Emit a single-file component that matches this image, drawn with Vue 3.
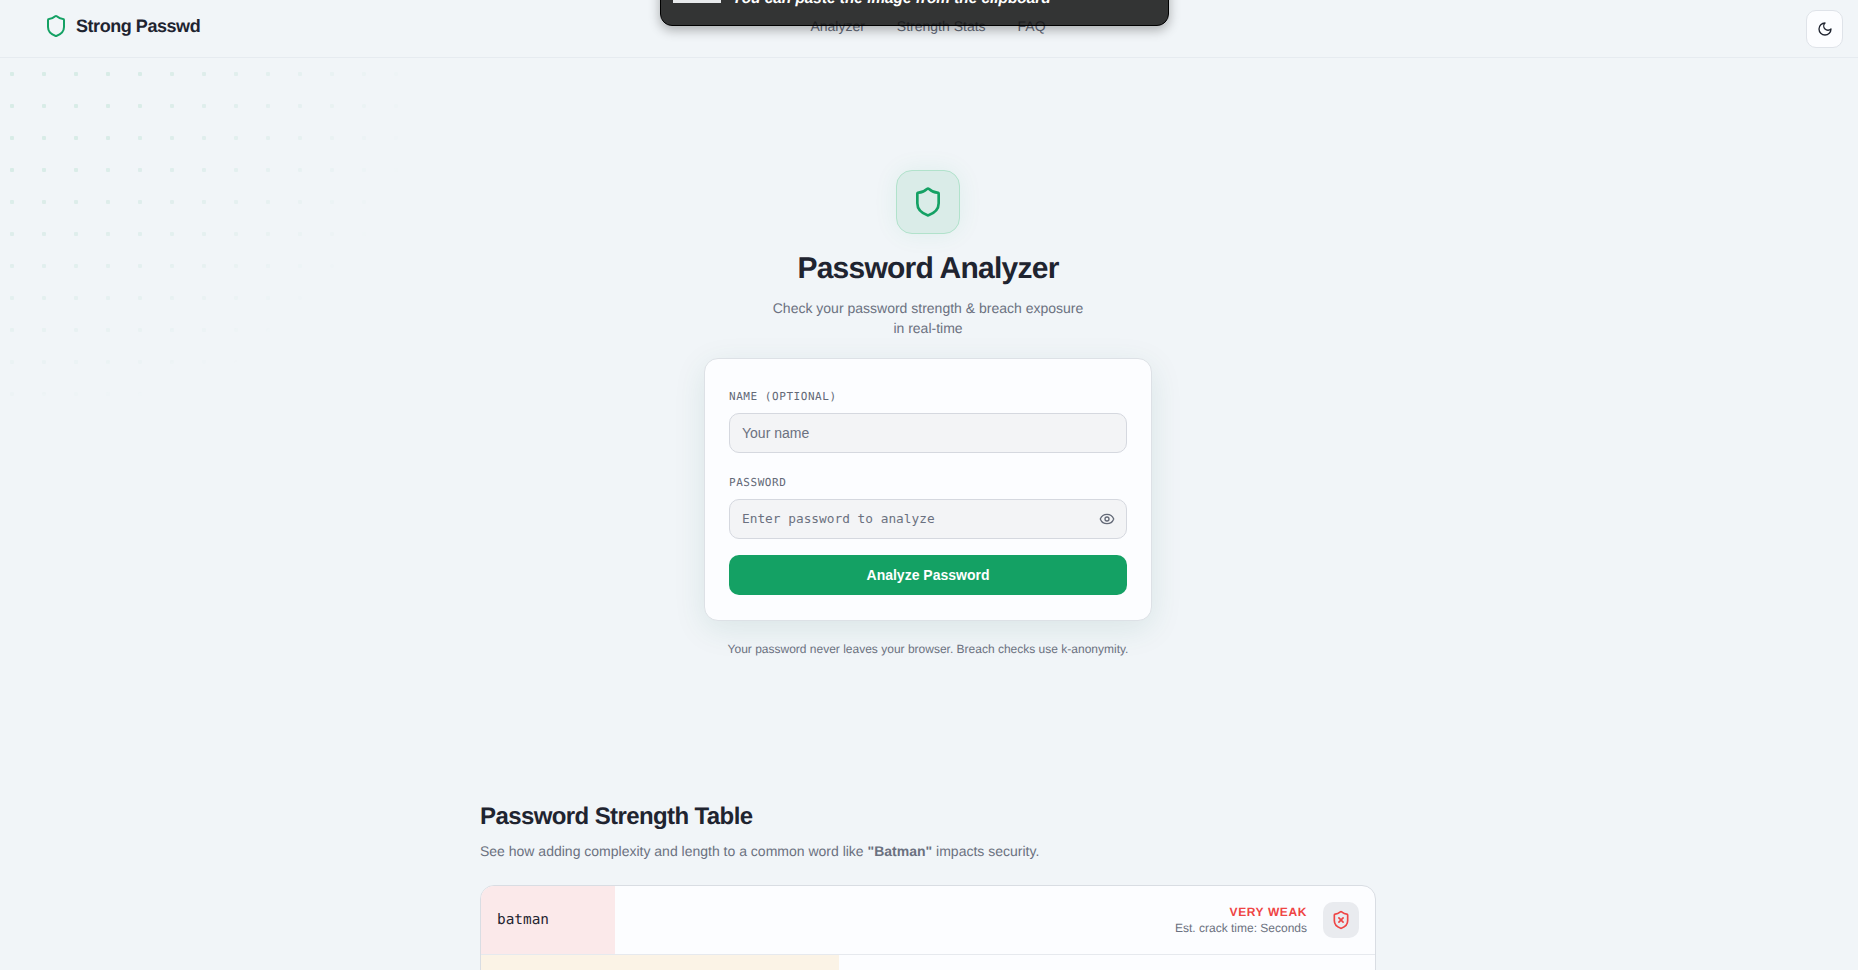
<script setup>
const rows = [
  { word: 'batman', barWidth: 134, tone: 'red', label: 'VERY WEAK', time: 'Est. crack time: Seconds' },
  { word: '', barWidth: 358, tone: 'amber' }
]
</script>

<template>
  <div class="page">
    <div class="dots"></div>

    <header class="navbar">
      <a class="logo">
        <svg class="logo-icon" viewBox="0 0 24 24" fill="none" stroke="currentColor" stroke-width="2" stroke-linecap="round" stroke-linejoin="round">
          <path d="M20 13c0 5-3.500 7.500-7.660 8.950a1 1 0 0 1-.67-.01C7.500 20.500 4 18 4 13V6a1 1 0 0 1 1-1c2 0 4.500-1.200 6.240-2.720a1.170 1.170 0 0 1 1.520 0C14.510 3.810 17 5 19 5a1 1 0 0 1 1 1z" />
        </svg>
        Strong Passwd
      </a>
      <nav class="nav-links">
        <a>Analyzer</a>
        <a>Strength Stats</a>
        <a>FAQ</a>
      </nav>
      <button class="theme-btn" aria-label="Toggle theme">
        <svg viewBox="0 0 24 24" fill="none" stroke="currentColor" stroke-width="2" stroke-linecap="round" stroke-linejoin="round">
          <path d="M12 3a6 6 0 0 0 9 9 9 9 0 1 1-9-9z" />
        </svg>
      </button>
    </header>

    <div class="toast">
      <span class="toast-thumb"></span>
      <span class="toast-text">You can paste the image from the clipboard</span>
    </div>

    <main class="hero">
      <div class="hero-icon">
        <svg viewBox="0 0 24 24" fill="none" stroke="currentColor" stroke-width="2" stroke-linecap="round" stroke-linejoin="round">
          <path d="M20 13c0 5-3.500 7.500-7.660 8.950a1 1 0 0 1-.67-.01C7.500 20.500 4 18 4 13V6a1 1 0 0 1 1-1c2 0 4.500-1.200 6.240-2.720a1.170 1.170 0 0 1 1.520 0C14.510 3.810 17 5 19 5a1 1 0 0 1 1 1z" />
        </svg>
      </div>
      <h1>Password Analyzer</h1>
      <p class="subtitle">Check your password strength &amp; breach exposure<br />in real-time</p>

      <form class="card" @submit.prevent>
        <label class="field-label">NAME (OPTIONAL)</label>
        <input class="field" type="text" placeholder="Your name" />
        <label class="field-label second">PASSWORD</label>
        <div class="password-wrap">
          <input class="field mono" type="text" placeholder="Enter password to analyze" />
          <svg class="eye" viewBox="0 0 24 24" fill="none" stroke="currentColor" stroke-width="2" stroke-linecap="round" stroke-linejoin="round">
            <path d="M2.062 12.348a1 1 0 0 1 0-.696 10.750 10.750 0 0 1 19.876 0 1 1 0 0 1 0 .696 10.750 10.750 0 0 1-19.876 0" />
            <circle cx="12" cy="12" r="3" />
          </svg>
        </div>
        <button class="submit">Analyze Password</button>
      </form>
      <p class="footnote">Your password never leaves your browser. Breach checks use k-anonymity.</p>
    </main>

    <section class="stats">
      <h2>Password Strength Table</h2>
      <p class="stats-sub">See how adding complexity and length to a common word like <strong>"Batman"</strong> impacts security.</p>
      <div class="table">
        <div v-for="row in rows" :key="row.tone" class="row">
          <div :class="['bar', row.tone]" :style="{ width: row.barWidth + 'px' }"></div>
          <span class="word">{{ row.word }}</span>
          <div v-if="row.label" class="verdict">
            <div class="verdict-text">
              <div class="verdict-label">{{ row.label }}</div>
              <div class="verdict-time">{{ row.time }}</div>
            </div>
            <div class="verdict-icon">
              <svg viewBox="0 0 24 24" fill="none" stroke="currentColor" stroke-width="2" stroke-linecap="round" stroke-linejoin="round">
                <path d="M20 13c0 5-3.500 7.500-7.660 8.950a1 1 0 0 1-.67-.01C7.500 20.500 4 18 4 13V6a1 1 0 0 1 1-1c2 0 4.500-1.200 6.240-2.720a1.170 1.170 0 0 1 1.520 0C14.510 3.810 17 5 19 5a1 1 0 0 1 1 1z" />
                <path d="m14.500 9.500-5 5" />
                <path d="m9.500 9.500 5 5" />
              </svg>
            </div>
          </div>
        </div>
      </div>
    </section>
  </div>
</template>

<style scoped>
.page {
  position: relative;
  height: 970px;
  overflow: hidden;
  background: #f1f5f8;
  color: #1f2430;
  font-family: "Liberation Sans", Arial, sans-serif;
  text-rendering: geometricPrecision;
}

.dots {
  position: absolute;
  left: 0;
  top: 58px;
  width: 440px;
  height: 340px;
  background-image: radial-gradient(circle at 12px 16px, rgba(20, 163, 100, 0.11) 2px, transparent 2.5px);
  background-size: 32px 32px;
  -webkit-mask-image: radial-gradient(430px 370px at 0 0, #000 30%, transparent 100%);
  mask-image: radial-gradient(430px 370px at 0 0, #000 30%, transparent 100%);
}

.navbar {
  position: relative;
  height: 58px;
  box-sizing: border-box;
  border-bottom: 1px solid #e6ebf0;
  display: grid;
  grid-template-columns: 1fr auto 1fr;
  align-items: center;
  padding: 0 15px 5px 13px;
}

.logo {
  display: flex;
  align-items: center;
  gap: 8px;
  margin-left: 31px;
  font-size: 18px;
  font-weight: 700;
  letter-spacing: -0.45px;
  color: #1f2430;
}

.logo-icon {
  width: 24px;
  height: 24px;
  color: #14a164;
}

.nav-links {
  display: flex;
  gap: 32px;
  font-size: 14px;
  line-height: 20px;
  color: #636977;
}

.theme-btn {
  justify-self: end;
  margin-top: 5px;
  width: 37px;
  height: 38px;
  border: 1px solid #dfe3e9;
  border-radius: 10px;
  background: #fcfdff;
  color: #1f2430;
  padding: 0;
  display: flex;
  align-items: center;
  justify-content: center;
}

.theme-btn svg {
  width: 16px;
  height: 16px;
}

.toast {
  position: absolute;
  left: 660px;
  top: -40px;
  width: 509px;
  height: 66px;
  box-sizing: border-box;
  background: rgba(14, 14, 14, 0.84);
  border: 1px solid #000;
  border-radius: 12px;
  box-shadow: 0 4px 12px rgba(0, 0, 0, 0.3);
  display: flex;
  align-items: flex-end;
  padding: 0 12px 22px;
  gap: 11px;
}

.toast-thumb {
  width: 48px;
  height: 6px;
  background: #e8eaec;
}

.toast-text {
  font-size: 15.36px;
  line-height: 16px;
  font-weight: 700;
  font-style: italic;
  color: #fff;
  transform: translateY(4px);
}

.hero {
  display: flex;
  flex-direction: column;
  align-items: center;
  padding-top: 112px;
  margin-right: 2px;
  position: relative;
}

.hero-icon {
  width: 64px;
  height: 64px;
  box-sizing: border-box;
  border: 1px solid #b1e2cb;
  border-radius: 16px;
  background: #daece8;
  box-shadow: 0 0 24px rgba(20, 163, 100, 0.08);
  color: #14a164;
  display: flex;
  align-items: center;
  justify-content: center;
}

.hero-icon svg {
  width: 32px;
  height: 32px;
}

h1 {
  margin: 17px 0 0;
  font-size: 30px;
  line-height: 36px;
  font-weight: 700;
  letter-spacing: -0.75px;
  color: #1f2430;
}

.subtitle {
  margin: 11px 0 0;
  font-size: 14px;
  line-height: 20px;
  text-align: center;
  color: #6b7180;
}

.card {
  width: 448px;
  box-sizing: border-box;
  margin-top: 20px;
  padding: 24px 24px 25px;
  background: #fcfdff;
  border: 1px solid #dde1e6;
  border-radius: 14px;
  box-shadow: 0 8px 32px rgba(20, 100, 80, 0.1);
  display: flex;
  flex-direction: column;
}

.field-label {
  font-family: "DejaVu Sans Mono", monospace;
  font-size: 11px;
  line-height: 16px;
  letter-spacing: 0.55px;
  color: #636977;
  margin: 6px 0 8px;
}

.field-label.second {
  margin-top: 22px;
}

.field {
  width: 100%;
  height: 40px;
  box-sizing: border-box;
  padding: 0 12px;
  border: 1px solid #d5d8df;
  border-radius: 10px;
  background: #f3f4f6;
  font-family: "Liberation Sans", Arial, sans-serif;
  font-size: 14px;
  outline: none;
}

.field::placeholder {
  color: #6b7180;
  opacity: 1;
}

.field.mono {
  font-family: "DejaVu Sans Mono", monospace;
  font-size: 12.8px;
  padding-bottom: 2px;
}

.password-wrap {
  position: relative;
}

.eye {
  position: absolute;
  right: 12px;
  top: 12px;
  width: 16px;
  height: 16px;
  color: #636977;
}

.submit {
  margin-top: 16px;
  height: 40px;
  border: none;
  border-radius: 10px;
  background: #14a164;
  color: #fff;
  font-family: "Liberation Sans", Arial, sans-serif;
  font-size: 14px;
  font-weight: 700;
}

.footnote {
  margin: 20px 0 0;
  font-size: 12px;
  line-height: 16px;
  color: #6b7180;
}

.stats {
  position: relative;
  width: 896px;
  margin: 144px auto 0;
  left: -1px;
}

h2 {
  margin: 0;
  font-size: 24px;
  line-height: 32px;
  font-weight: 700;
  letter-spacing: -0.6px;
  color: #1f2430;
}

.stats-sub {
  margin: 8px 0 0;
  font-size: 14px;
  line-height: 20px;
  color: #6b7180;
}

.table {
  margin-top: 24px;
  background: #fcfdff;
  border: 1px solid #d9dde3;
  border-radius: 14px;
  overflow: hidden;
}

.row {
  position: relative;
  min-height: 68px;
  display: flex;
  align-items: center;
  justify-content: space-between;
  padding: 0 16px;
  border-bottom: 1px solid #e6e9ee;
}

.bar {
  position: absolute;
  left: 0;
  top: 0;
  bottom: 0;
}

.bar.red {
  background: #fbe9ea;
}

.bar.amber {
  background: #fbf3e6;
}

.word {
  position: relative;
  font-family: "DejaVu Sans Mono", monospace;
  font-size: 14.4px;
  color: #1f2430;
}

.verdict {
  position: relative;
  display: flex;
  align-items: center;
  gap: 16px;
}

.verdict-text {
  text-align: right;
}

.verdict-label {
  font-size: 12px;
  line-height: 16px;
  font-weight: 700;
  letter-spacing: 0.6px;
  color: #ef4444;
}

.verdict-time {
  font-size: 12px;
  line-height: 16px;
  color: #6b7180;
}

.verdict-icon {
  width: 36px;
  height: 36px;
  border-radius: 10px;
  background: #e9ebef;
  color: #ef4444;
  display: flex;
  align-items: center;
  justify-content: center;
}

.verdict-icon svg {
  width: 20px;
  height: 20px;
}
</style>
